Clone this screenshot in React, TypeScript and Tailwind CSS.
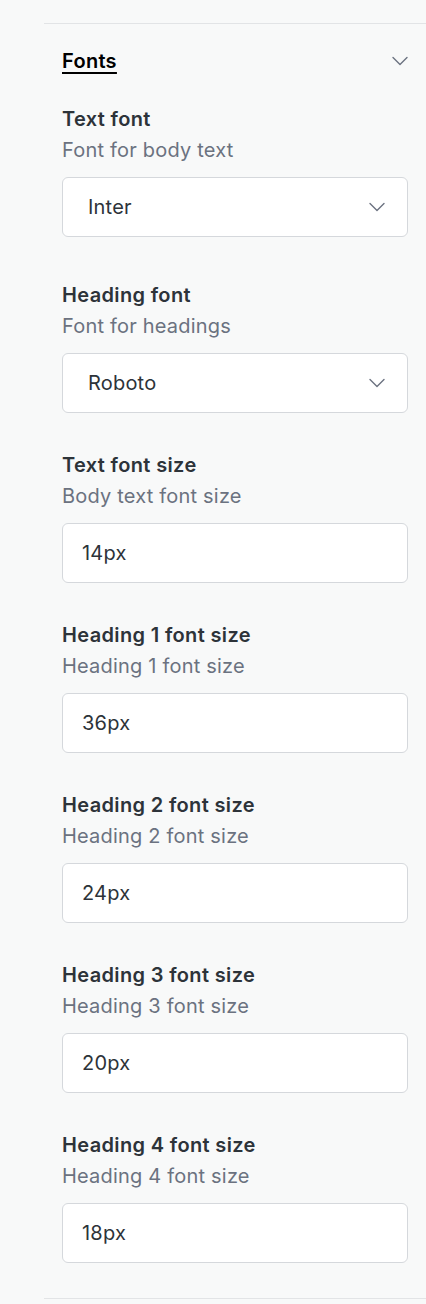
import { ChevronDown } from 'lucide-react';

type Field = {
  label: string;
  hint: string;
  value: string;
  kind: 'select' | 'input';
};

const fields: Field[] = [
  { label: 'Text font', hint: 'Font for body text', value: 'Inter', kind: 'select' },
  { label: 'Heading font', hint: 'Font for headings', value: 'Roboto', kind: 'select' },
  { label: 'Text font size', hint: 'Body text font size', value: '14px', kind: 'input' },
  { label: 'Heading 1 font size', hint: 'Heading 1 font size', value: '36px', kind: 'input' },
  { label: 'Heading 2 font size', hint: 'Heading 2 font size', value: '24px', kind: 'input' },
  { label: 'Heading 3 font size', hint: 'Heading 3 font size', value: '20px', kind: 'input' },
  { label: 'Heading 4 font size', hint: 'Heading 4 font size', value: '18px', kind: 'input' },
];

export default function App() {
  return (
    <div className="min-h-screen bg-[#f8f9f9] pt-[23px] pl-[44px] font-['Inter',sans-serif]">
      <section className="border-t border-b border-[#e2e4e6] pl-[18px] pr-[18px] pb-[35px]">
        {/* header */}
        <div className="flex items-center justify-between pt-[23px]">
          <h2 className="text-[20px] leading-[28px] font-semibold tracking-[0.3px] text-black underline underline-offset-[4px] decoration-[1.5px]">
            Fonts
          </h2>
          <ChevronDown size={28} strokeWidth={1.2} className="text-[#6b7280] mr-[-6px]" />
        </div>

        <div className="flex flex-col gap-[37px] pt-[29px]">
          {fields.map((f, i) => (
            <div key={f.label} className={i === 0 ? 'mb-[6px]' : ''}>
              <div className="text-[20px] leading-[30px] font-semibold tracking-[0.35px] text-[#2d3339]">{f.label}</div>
              <div className="text-[20px] leading-[32px] tracking-[0.2px] text-[#6b7280]">{f.hint}</div>
              <div className="mt-[11px] h-[60px] rounded-md border border-[#d5d8dc] bg-white flex items-center justify-between">
                {f.kind === 'select' ? (
                  <>
                    <span className="pl-[25px] text-[20px] tracking-[0.2px] text-[#2d3339]">{f.value}</span>
                    <ChevronDown size={28} strokeWidth={1.2} className="text-[#6b7280] mr-[16px]" />
                  </>
                ) : (
                  <span className="pl-[19px] text-[20px] tracking-[0.2px] text-[#2d3339]">{f.value}</span>
                )}
              </div>
            </div>
          ))}
        </div>
      </section>
    </div>
  );
}
